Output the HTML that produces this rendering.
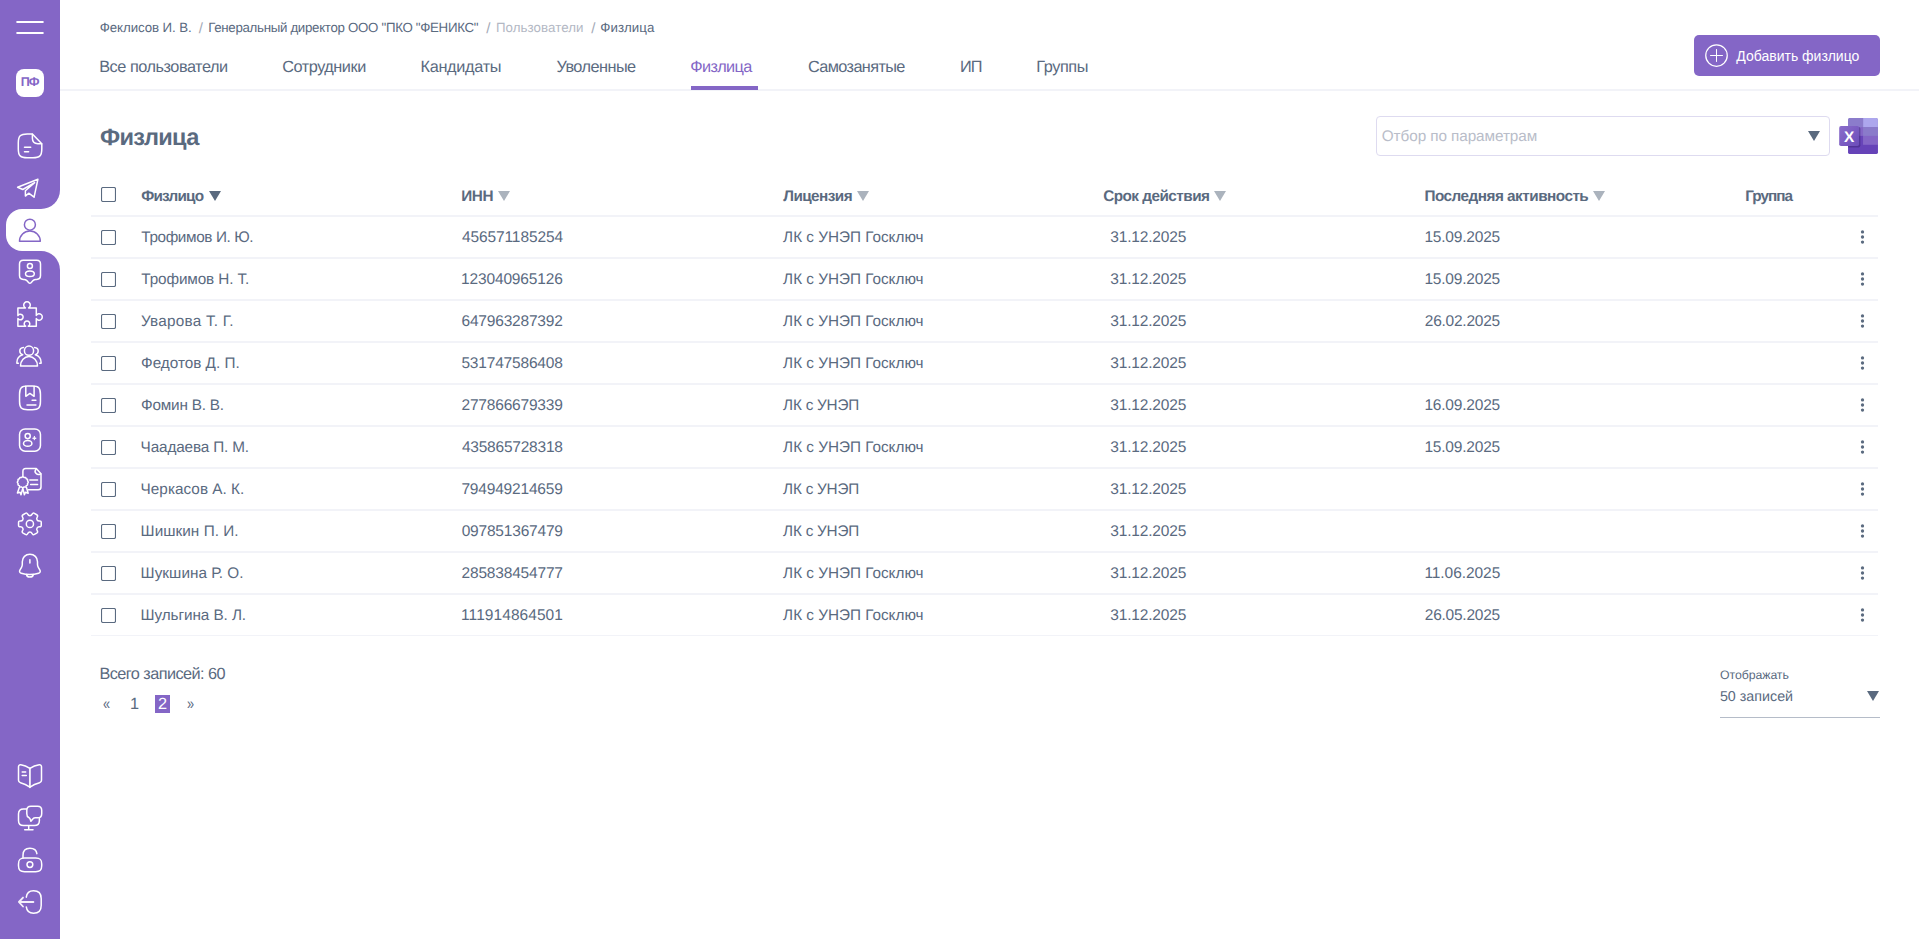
<!DOCTYPE html>
<html lang="ru">
<head>
<meta charset="utf-8">
<title>Физлица</title>
<style>
*{box-sizing:border-box;margin:0;padding:0}
html,body{width:1919px;height:939px;overflow:hidden;background:#fff}
body{font-family:"Liberation Sans",sans-serif;color:#5a6a7f;font-size:15.3px;position:relative;text-rendering:geometricPrecision}
a{color:inherit;text-decoration:none}
button{font-family:"Liberation Sans",sans-serif;border:0;cursor:pointer}

/* ---------- sidebar ---------- */
.sidebar{position:absolute;left:0;top:0;width:60px;height:939px;background:#8466c6}
.burger{position:absolute;left:16px;top:20px;width:28px;height:14px;display:block}
.burger svg{display:block;width:28px;height:14px;fill:none;stroke:#fff;stroke-width:1.8;stroke-linecap:round}
.logo{position:absolute;left:16px;top:69px;width:28px;height:28px;border-radius:8px;background:#fff;color:#8466c6;font-weight:700;font-size:12.6px;line-height:27.4px;text-align:center;letter-spacing:-.9px;text-indent:-.6px}
.ico{position:absolute;left:10px;width:40px;height:40px;display:block}
.ico svg{display:block;width:40px;height:40px;fill:none;stroke:#fff;stroke-width:1.5;stroke-linecap:round;stroke-linejoin:round}
.ico.on svg{stroke:#8466c6}
.active-bg{position:absolute;left:6px;top:209px;width:54px;height:42px;background:#fff;border-radius:16px 0 0 16px}
.notch{position:absolute;right:0;width:19px;height:19px;background:#fff;overflow:hidden}
.notch:before{content:"";position:absolute;left:-19px;width:38px;height:38px;background:#8466c6;border-radius:19px}
.notch.up{top:190px}
.notch.up:before{top:-19px}
.notch.down{top:251px}
.notch.down:before{top:0}

/* ---------- header ---------- */
.header{position:absolute;left:60px;top:0;width:1859px;height:91px;border-bottom:2px solid #f2f3f8}
.crumbs{position:absolute;left:0;top:20px;height:16px;font-size:13.3px;line-height:16px;white-space:nowrap;color:#5a6a7f}
.crumbs a,.crumbs span{position:absolute;top:0}
.crumbs .sep{color:#a4aab7;font-size:15px;margin-left:-.3px;top:1px}
.crumbs .muted{color:#b3b8c4}
.tabs{position:absolute;left:0;top:0;height:90px}
.tabs a{position:absolute;top:57px;font-size:16.3px;line-height:20px;white-space:nowrap;color:#5a6a7f}
.tabs a.on{color:#8466c6}
.tabs .bar{position:absolute;left:631px;top:86px;width:67px;height:4px;background:#8466c6}
.addbtn{position:absolute;left:1634px;top:35px;width:186px;height:41px;border-radius:5px;background:#8466c6;color:#fff;font-size:14px;line-height:41px;white-space:nowrap;text-align:left}
.addbtn svg{position:absolute;left:9px;top:7px;width:27px;height:27px;fill:none;stroke:#fff;stroke-width:1}
.addbtn span{position:absolute;left:42.3px;top:1px;text-rendering:auto}

/* ---------- toolbar ---------- */
h1{position:absolute;top:123px;font-size:23.6px;line-height:30px;font-weight:700;color:#5a6a7f;white-space:nowrap}
.filter{position:absolute;left:1376px;top:116px;width:454px;height:40px;border:1px solid #dedbf0;border-radius:4px;background:#fff}
.filter span{position:absolute;top:1px;line-height:38px;font-size:15.3px;color:#b9bdc9;white-space:nowrap}
.filter i{position:absolute;right:9px;top:13.5px;width:0;height:0;border-left:6px solid transparent;border-right:6px solid transparent;border-top:10px solid #5a6a7f}
.xls{position:absolute;left:1838px;top:117px;width:41px;height:38px;display:block}
.xls svg{display:block;width:41px;height:38px}

/* ---------- table ---------- */
table{position:absolute;left:91px;top:174px;width:1787px;border-collapse:separate;border-spacing:0;table-layout:fixed}
th,td{height:42px;padding:11px 0 0 8px;text-align:left;font-size:15.3px;line-height:20px;white-space:nowrap;vertical-align:top;border-bottom:2px solid #f2f3f8;color:#5a6a7f;font-weight:400;overflow:visible}
th{font-weight:700;height:43px;padding-top:13px}
td.n{font-size:15.5px}
th{position:relative}
th .s{position:absolute;top:17px;width:0;height:0;border-left:6px solid transparent;border-right:6px solid transparent;border-top:10px solid #abb3bd}
th .s.dark{border-top-color:#5a6a7f}
th.c,td.c{padding:13px 0 0 10px}
.cb{display:block;width:15px;height:15px;fill:#fff;stroke:#5a6a80;stroke-width:1.15}
td.k{padding:12px 0 0 13px}
.kebab{display:block;width:7px;height:16px;fill:#5a6a7f}
tbody tr:last-child td{height:41px;border-bottom:1px solid #f2f3f8}

/* ---------- footer ---------- */
.total{position:absolute;top:664px;font-size:16.3px;line-height:20px;white-space:nowrap}
.pager{position:absolute;left:0;top:695px;height:18px;font-size:16.3px;line-height:18px}
.pager a{position:absolute;top:0;height:18px}
.pager a.g{transform:scaleX(.78);transform-origin:0 50%}
.pager a.on{background:#8466c6;color:#fff;width:15px;text-align:center}
.show{position:absolute;left:1720px;top:666px;width:160px;height:52px;border-bottom:1px solid #b5bcc8}
.show label{position:absolute;top:2px;font-size:12.3px;line-height:14px;white-space:nowrap}
.show span{position:absolute;top:21px;font-size:14.3px;line-height:20px;white-space:nowrap}
.show i{position:absolute;right:1px;top:25px;width:0;height:0;border-left:6px solid transparent;border-right:6px solid transparent;border-top:10px solid #5a6a7f}
</style>
</head>
<body>
<nav class="sidebar">
  <a class="burger"><svg viewBox="0 0 28 14"><path d="M1.1 2h25.8M1.1 13h25.8"/></svg></a>
  <a class="logo">ПФ</a>
  <div class="notch up"></div>
  <div class="active-bg"></div>
  <div class="notch down"></div>
  <a class="ico" style="top:126px"><svg viewBox="0 0 40 40"><path d="M22.4 7.9H17.2C10.4 7.9 8.3 10 8.3 16.8V22.9C8.3 29.7 10.4 31.8 17.2 31.8H22.9C29.7 31.8 31.8 29.7 31.8 22.9V17.7L22.4 7.9Z"/><path d="M22.4 8.2V12.3C22.4 16.2 23.9 17.7 27.8 17.7H31.6"/><path d="M14.5 21.2H20.7M14.5 25.8H18.6"/></svg></a>
  <a class="ico" style="top:168px"><svg viewBox="0 0 40 40"><path d="M27.9 11.3L7.6 19.2L12.8 21.5L24.6 14.6L15.4 22.7V28.1L18.7 25.2L24.1 29.2Z"/></svg></a>
  <a class="ico on" style="top:210px"><svg viewBox="0 0 40 40"><circle cx="19.9" cy="14.7" r="5.5"/><path d="M9.5 31.2A10.4 10.3 0 0 1 30.3 31.2Z"/></svg></a>
  <a class="ico" style="top:252px"><svg viewBox="0 0 40 40"><path d="M13.3 8.3H26.7C29.3 8.3 30.5 9.5 30.5 12.1V23.6C30.5 26.2 29.3 27.4 26.7 27.4H25.8C24.6 27.4 23.8 27.8 23 28.6L21.3 30.4C20.4 31.4 19.4 31.4 18.5 30.4L16.8 28.6C16 27.8 15.2 27.4 14 27.4H13.3C10.7 27.4 9.5 26.2 9.5 23.6V12.1C9.5 9.5 10.7 8.3 13.3 8.3Z"/><circle cx="19.9" cy="14.1" r="2.5"/><ellipse cx="19.9" cy="21.7" rx="4.4" ry="2.8"/></svg></a>
  <a class="ico" style="top:294px"><svg viewBox="0 0 40 40"><path d="M7.9 13.95H15.4A3.3 3.3 0 1 1 18.6 13.95H26.3V21.4A3.2 3.2 0 1 1 26.3 24.6V32.2H18.3A2.8 2.8 0 1 0 15.7 32.2H7.9V24.4A2.8 2.8 0 1 0 7.9 21.6Z"/></svg></a>
  <a class="ico" style="top:336px"><svg viewBox="0 0 40 40"><circle cx="19" cy="14.7" r="4.6"/><path d="M10.500 29.900A8.500 9.400 0 0 1 27.500 29.900Z"/><path d="M13.500 11.500C11.300 11.700 9.800 13.100 9.800 15C9.800 16.800 11 18.200 12.700 18.700C9.200 19.900 6.900 22.800 6.900 26.200V27.200H8.400"/><path d="M24.500 11.500C26.700 11.700 28.200 13.100 28.200 15C28.200 16.800 27 18.200 25.300 18.700C28.800 19.900 31.100 22.800 31.100 26.200V27.200H29.600"/></svg></a>
  <a class="ico" style="top:378px"><svg viewBox="0 0 40 40"><path d="M17.6 8.1H22.4C28.6 8.1 30.45 9.95 30.45 16.3V23.5C30.45 29.8 28.6 31.65 22.4 31.65H17.6C11.4 31.65 9.55 29.8 9.55 23.5V16.3C9.55 9.95 11.4 8.1 17.6 8.1Z"/><path d="M15.800 8.300V18.300L19.900 15.400L24.100 18.300V8.300"/><path d="M22.100 22.200H25.900M17 26.900H25.900"/></svg></a>
  <a class="ico" style="top:420px"><svg viewBox="0 0 40 40"><rect x="9.55" y="8.9" width="20.9" height="22.3" rx="5.6" ry="5.6"/><circle cx="17.700" cy="16.100" r="2.550"/><ellipse cx="17.700" cy="23.400" rx="4.200" ry="2.850"/><path d="M24.400 16.500C24.600 17.700 25 18.100 26.200 18.300C25 18.500 24.600 18.900 24.400 20.100C24.200 18.900 23.800 18.500 22.600 18.300C23.800 18.100 24.200 17.700 24.400 16.500Z" fill="#fff" stroke-width=".9"/></svg></a>
  <a class="ico" style="top:462px"><svg viewBox="0 0 40 40"><path d="M12.900 14V9.400C12.900 7.500 13.800 6.600 15.700 6.600H26.300L31 11.800V25C31 26.900 30.100 27.800 28.200 27.800H18.400"/><path d="M26.200 6.900C24.900 8.300 24.900 10.300 26.100 11.500C27.300 12.700 29.300 12.700 30.700 11.800"/><path d="M19.800 17.900H27.600M20.600 22.400H27.600"/><path d="M18.30 20.20L17.96 20.88L17.53 21.47L17.60 22.19L17.56 22.95L16.93 23.37L16.26 23.66L15.97 24.33L15.55 24.96L14.79 25.00L14.07 24.93L13.48 25.36L12.80 25.70L12.12 25.36L11.53 24.93L10.81 25.00L10.05 24.96L9.63 24.33L9.34 23.66L8.67 23.37L8.04 22.95L8.00 22.19L8.07 21.47L7.64 20.88L7.30 20.20L7.64 19.52L8.07 18.93L8.00 18.21L8.04 17.45L8.67 17.03L9.34 16.74L9.63 16.07L10.05 15.44L10.81 15.40L11.53 15.47L12.12 15.04L12.80 14.70L13.48 15.04L14.07 15.47L14.79 15.40L15.55 15.44L15.97 16.07L16.26 16.74L16.93 17.03L17.56 17.45L17.60 18.21L17.53 18.93L17.96 19.52L18.30 20.20Z"/><path d="M9.400 25.200L7.400 31L10.100 30.200L11 32.800L12.800 26.300M12.800 26.300L14.400 32.800L15.500 30.200L18.200 31.300L16.400 25.200"/></svg></a>
  <a class="ico" style="top:504px"><svg viewBox="0 0 40 40"><path d="M29.55 16.95Q31.25 16.86 31.25 18.56L31.25 21.24Q31.25 22.94 29.55 22.85L29.44 22.85Q27.75 22.76 27.02 24.01L27.02 24.01Q26.30 25.27 27.22 26.69L27.28 26.78Q28.21 28.21 26.74 29.06L24.41 30.40Q22.94 31.25 22.17 29.73L22.12 29.64Q21.35 28.12 19.90 28.12L19.90 28.12Q18.45 28.12 17.68 29.64L17.63 29.73Q16.86 31.25 15.39 30.40L13.06 29.06Q11.59 28.21 12.52 26.78L12.58 26.69Q13.50 25.27 12.78 24.01L12.78 24.01Q12.05 22.76 10.36 22.85L10.25 22.85Q8.55 22.94 8.55 21.24L8.55 18.56Q8.55 16.86 10.25 16.95L10.36 16.95Q12.05 17.04 12.78 15.79L12.78 15.79Q13.50 14.53 12.58 13.11L12.52 13.02Q11.59 11.59 13.06 10.74L15.39 9.40Q16.86 8.55 17.63 10.07L17.68 10.16Q18.45 11.68 19.90 11.68L19.90 11.68Q21.35 11.68 22.12 10.16L22.17 10.07Q22.94 8.55 24.41 9.40L26.74 10.74Q28.21 11.59 27.28 13.02L27.22 13.11Q26.30 14.53 27.02 15.79L27.02 15.79Q27.75 17.04 29.44 16.95Z"/><circle cx="19.900" cy="19.900" r="3.600"/></svg></a>
  <a class="ico" style="top:546px"><svg viewBox="0 0 40 40"><path d="M19.900 8.200C15.500 8.200 12.300 11.400 12.300 15.800V18.500C12.300 19.500 12 20.400 11.500 21.300L9.900 24.100C9.100 25.500 9.700 26.800 11.200 27.200C16.900 28.800 22.900 28.800 28.600 27.200C30.100 26.800 30.700 25.500 29.900 24.100L28.300 21.300C27.800 20.400 27.500 19.500 27.500 18.500V15.800C27.500 11.400 24.300 8.200 19.900 8.200Z"/><path d="M16.500 28.500C17.100 31.900 22.700 31.900 23.300 28.500"/><path d="M19.900 13.700V16.900"/></svg></a>
  <a class="ico" style="top:756px"><svg viewBox="0 0 40 40"><path d="M19.900 12.400C17 10.500 14 9.300 10.800 8.800C9.400 8.600 8.500 9.500 8.500 10.800V24.300C8.500 25.600 9.200 26.400 10.500 26.700C13.800 27.500 16.900 29 19.900 31.200C22.900 29 26.200 27.500 29.500 26.700C30.800 26.400 31.500 25.600 31.500 24.300V10.800C31.500 9.500 30.600 8.600 29.200 8.800C26 9.300 22.800 10.500 19.900 12.400Z"/><path d="M19.900 12.400V31.200" stroke-width="1.85" opacity=".9"/><path d="M12.200 16H15.700M12.200 19.500H16.300"/></svg></a>
  <a class="ico" style="top:798px"><svg viewBox="0 0 40 40"><path d="M16.400 10.900H13.600C10 10.900 8.500 12.400 8.500 16V22.400C8.500 26 10 27.500 13.600 27.500H24.300C27.900 27.500 29.400 26 29.400 22.400V20.600"/><path d="M18.700 27.700V31.700M14.700 31.700H23"/><path d="M20.900 8.200H27.600C30.500 8.200 31.700 9.400 31.700 12.300V15.700C31.700 18.600 30.500 19.800 27.600 19.800H25.400C24.300 19.800 23.500 20.200 22.800 21L20.900 23.300L19.900 20.600C19.600 20 19.300 19.800 18.700 19.500C17.300 18.800 16.800 17.700 16.800 15.700V12.300C16.800 9.400 18 8.200 20.900 8.200Z"/></svg></a>
  <a class="ico" style="top:840px"><svg viewBox="0 0 40 40"><path d="M14.500 17.900H25.700C30.200 17.900 31.700 19.400 31.700 23.900V25.700C31.700 30.200 30.200 31.700 25.700 31.700H14.500C10 31.700 8.500 30.200 8.500 25.700V23.900C8.500 19.400 10 17.900 14.500 17.900Z"/><path d="M13 17.700V15.200C13 10.900 15.600 8.300 19.900 8.300C23.900 8.300 26.500 10.300 26.900 13.700"/><circle cx="19.900" cy="24.600" r="2.900"/></svg></a>
  <a class="ico" style="top:882px"><svg viewBox="0 0 40 40"><path d="M16.300 15.200C16.800 10.800 19 8.800 23.500 8.800C28.900 8.800 31.200 11.100 31.200 16.500V23.500C31.200 28.900 28.900 31.200 23.500 31.200C19 31.200 16.800 29.200 16.300 24.900"/><path d="M23.400 20H9.200M13 15.600L8.900 20L13 24.500" stroke-width="1.85" opacity=".9"/></svg></a>
</nav>

<header class="header">
  <nav class="crumbs">
    <a style="left:39.8px;letter-spacing:-0.09px;">Феклисов И. В.</a>
    <span class="sep" style="left:139.0px;letter-spacing:0.00px;">/</span>
    <a style="left:148.2px;letter-spacing:-0.31px;">Генеральный директор ООО &quot;ПКО &quot;ФЕНИКС&quot;</a>
    <span class="sep" style="left:426.5px;letter-spacing:0.00px;">/</span>
    <a class="muted" style="left:436.0px;letter-spacing:0.06px;">Пользователи</a>
    <span class="sep" style="left:531.5px;letter-spacing:0.00px;">/</span>
    <a style="left:540.3px;letter-spacing:0.05px;">Физлица</a>
  </nav>
  <nav class="tabs">
    <a style="left:39.2px;letter-spacing:-0.47px;">Все пользователи</a>
    <a style="left:222.2px;letter-spacing:-0.46px;">Сотрудники</a>
    <a style="left:360.5px;letter-spacing:-0.31px;">Кандидаты</a>
    <a style="left:496.5px;letter-spacing:-0.53px;">Уволенные</a>
    <a class="on" style="left:630.2px;letter-spacing:-0.60px;">Физлица</a>
    <a style="left:748.0px;letter-spacing:-0.62px;">Самозанятые</a>
    <a style="left:900.0px;letter-spacing:-1.07px;">ИП</a>
    <a style="left:976.2px;letter-spacing:-0.40px;">Группы</a>
    <i class="bar"></i>
  </nav>
  <button class="addbtn"><svg viewBox="0 0 27 27"><circle cx="13.5" cy="13.5" r="10.75" stroke-width="1.25"/><path d="M13.5 7.1v12.8M7.1 13.5h12.8"/></svg><span>Добавить физлицо</span></button>
</header>

<main>
<h1 style="left:100.0px;letter-spacing:-0.70px">Физлица</h1>
<div class="filter"><span style="left:4.8px;letter-spacing:-0.08px">Отбор по параметрам</span><i></i></div>
<a class="xls"><svg viewBox="0 0 41 38"><defs><linearGradient id="xg" x1="0" y1="0" x2="1" y2="1"><stop offset="0" stop-color="#8a6dca"/><stop offset="1" stop-color="#6c4cba"/></linearGradient><clipPath id="xc"><rect x="10.1" y="1" width="29.8" height="36" rx="1.8"/></clipPath></defs><g clip-path="url(#xc)"><rect x="10" y="1" width="31" height="36" fill="#8a7bca"/><rect x="10" y="1" width="15.2" height="9.1" fill="#8b7ccb"/><rect x="25.2" y="1" width="15" height="9.1" fill="#ada7ed"/><rect x="10" y="10.100" width="15.2" height="9.200" fill="#8466c6"/><rect x="25.2" y="10.100" width="15" height="9.200" fill="#8a7bca"/><rect x="10" y="18.900" width="15.400" height="9.200" fill="#6845b9"/><rect x="25.2" y="18.900" width="15" height="9.200" fill="#8466c6"/><rect x="10" y="27.800" width="30.200" height="9.200" fill="#6643b8"/><rect x="2.400" y="10" width="20" height="20.400" rx="1.800" fill="#35206e" opacity=".45"/></g><rect x="1.200" y="9.100" width="19.900" height="19.900" rx="1.800" fill="url(#xg)"/><text x="11.150" y="24.600" text-anchor="middle" font-family="Liberation Sans,sans-serif" font-size="15.4" font-weight="700" fill="#fff">X</text></svg></a>

<table>
  <colgroup><col style="width:42px"><col style="width:321px"><col style="width:321px"><col style="width:321px"><col style="width:321px"><col style="width:320px"><col style="width:109px"><col style="width:32px"></colgroup>
  <thead>
    <tr><th class="c"><svg class="cb" viewBox="0 0 15 15"><rect x=".5" y=".5" width="14" height="14" rx="1.5"/></svg></th><th style="padding-left:8.2px"><span style="letter-spacing:-0.81px">Физлицо</span><i class="s dark" style="left:76.2px"></i></th><th style="padding-left:7.2px"><span style="letter-spacing:-0.35px">ИНН</span><i class="s" style="left:43.6px"></i></th><th style="padding-left:8.2px"><span style="letter-spacing:-0.54px">Лицензия</span><i class="s" style="left:81.8px"></i></th><th style="padding-left:7.2px"><span style="letter-spacing:-0.52px">Срок действия</span><i class="s" style="left:118.1px"></i></th><th style="padding-left:7.5px"><span style="letter-spacing:-0.51px">Последняя активность</span><i class="s" style="left:176.4px"></i></th><th style="padding-left:8.2px"><span style="letter-spacing:-0.98px">Группа</span></th><th></th></tr>
  </thead>
  <tbody>
    <tr><td class="c"><svg class="cb" viewBox="0 0 15 15"><rect x=".5" y=".5" width="14" height="14" rx="1.5"/></svg></td><td style="padding-left:8.3px;letter-spacing:-0.38px">Трофимов И. Ю.</td><td class="n" style="padding-left:7.9px;letter-spacing:-0.10px">456571185254</td><td style="padding-left:8.1px;letter-spacing:0.00px">ЛК с УНЭП Госключ</td><td class="n" style="padding-left:14.3px;letter-spacing:-0.18px">31.12.2025</td><td class="n" style="padding-left:7.4px;letter-spacing:-0.20px">15.09.2025</td><td></td><td class="k"><svg class="kebab" viewBox="0 0 7 16"><circle cx="3.5" cy="2.95" r="1.65"/><circle cx="3.5" cy="8" r="1.65"/><circle cx="3.5" cy="13.05" r="1.65"/></svg></td></tr>
    <tr><td class="c"><svg class="cb" viewBox="0 0 15 15"><rect x=".5" y=".5" width="14" height="14" rx="1.5"/></svg></td><td style="padding-left:8.3px;letter-spacing:-0.12px">Трофимов Н. Т.</td><td class="n" style="padding-left:7.1px;letter-spacing:-0.16px">123040965126</td><td style="padding-left:8.1px;letter-spacing:0.00px">ЛК с УНЭП Госключ</td><td class="n" style="padding-left:14.3px;letter-spacing:-0.18px">31.12.2025</td><td class="n" style="padding-left:7.4px;letter-spacing:-0.20px">15.09.2025</td><td></td><td class="k"><svg class="kebab" viewBox="0 0 7 16"><circle cx="3.5" cy="2.95" r="1.65"/><circle cx="3.5" cy="8" r="1.65"/><circle cx="3.5" cy="13.05" r="1.65"/></svg></td></tr>
    <tr><td class="c"><svg class="cb" viewBox="0 0 15 15"><rect x=".5" y=".5" width="14" height="14" rx="1.5"/></svg></td><td style="padding-left:8.0px;letter-spacing:0.23px">Уварова Т. Г.</td><td class="n" style="padding-left:7.5px;letter-spacing:-0.19px">647963287392</td><td style="padding-left:8.1px;letter-spacing:0.00px">ЛК с УНЭП Госключ</td><td class="n" style="padding-left:14.3px;letter-spacing:-0.18px">31.12.2025</td><td class="n" style="padding-left:7.8px;letter-spacing:-0.25px">26.02.2025</td><td></td><td class="k"><svg class="kebab" viewBox="0 0 7 16"><circle cx="3.5" cy="2.95" r="1.65"/><circle cx="3.5" cy="8" r="1.65"/><circle cx="3.5" cy="13.05" r="1.65"/></svg></td></tr>
    <tr><td class="c"><svg class="cb" viewBox="0 0 15 15"><rect x=".5" y=".5" width="14" height="14" rx="1.5"/></svg></td><td style="padding-left:8.0px;letter-spacing:0.00px">Федотов Д. П.</td><td class="n" style="padding-left:7.4px;letter-spacing:-0.18px">531747586408</td><td style="padding-left:8.1px;letter-spacing:0.00px">ЛК с УНЭП Госключ</td><td class="n" style="padding-left:14.3px;letter-spacing:-0.18px">31.12.2025</td><td></td><td></td><td class="k"><svg class="kebab" viewBox="0 0 7 16"><circle cx="3.5" cy="2.95" r="1.65"/><circle cx="3.5" cy="8" r="1.65"/><circle cx="3.5" cy="13.05" r="1.65"/></svg></td></tr>
    <tr><td class="c"><svg class="cb" viewBox="0 0 15 15"><rect x=".5" y=".5" width="14" height="14" rx="1.5"/></svg></td><td style="padding-left:8.0px;letter-spacing:-0.20px">Фомин В. В.</td><td class="n" style="padding-left:7.5px;letter-spacing:-0.19px">277866679339</td><td style="padding-left:8.1px;letter-spacing:-0.22px">ЛК с УНЭП</td><td class="n" style="padding-left:14.3px;letter-spacing:-0.18px">31.12.2025</td><td class="n" style="padding-left:7.4px;letter-spacing:-0.20px">16.09.2025</td><td></td><td class="k"><svg class="kebab" viewBox="0 0 7 16"><circle cx="3.5" cy="2.95" r="1.65"/><circle cx="3.5" cy="8" r="1.65"/><circle cx="3.5" cy="13.05" r="1.65"/></svg></td></tr>
    <tr><td class="c"><svg class="cb" viewBox="0 0 15 15"><rect x=".5" y=".5" width="14" height="14" rx="1.5"/></svg></td><td style="padding-left:7.6px;letter-spacing:-0.14px">Чаадаева П. М.</td><td class="n" style="padding-left:7.9px;letter-spacing:-0.22px">435865728318</td><td style="padding-left:8.1px;letter-spacing:0.00px">ЛК с УНЭП Госключ</td><td class="n" style="padding-left:14.3px;letter-spacing:-0.18px">31.12.2025</td><td class="n" style="padding-left:7.4px;letter-spacing:-0.20px">15.09.2025</td><td></td><td class="k"><svg class="kebab" viewBox="0 0 7 16"><circle cx="3.5" cy="2.95" r="1.65"/><circle cx="3.5" cy="8" r="1.65"/><circle cx="3.5" cy="13.05" r="1.65"/></svg></td></tr>
    <tr><td class="c"><svg class="cb" viewBox="0 0 15 15"><rect x=".5" y=".5" width="14" height="14" rx="1.5"/></svg></td><td style="padding-left:7.6px;letter-spacing:0.03px">Черкасов А. К.</td><td class="n" style="padding-left:7.4px;letter-spacing:-0.18px">794949214659</td><td style="padding-left:8.1px;letter-spacing:-0.22px">ЛК с УНЭП</td><td class="n" style="padding-left:14.3px;letter-spacing:-0.18px">31.12.2025</td><td></td><td></td><td class="k"><svg class="kebab" viewBox="0 0 7 16"><circle cx="3.5" cy="2.95" r="1.65"/><circle cx="3.5" cy="8" r="1.65"/><circle cx="3.5" cy="13.05" r="1.65"/></svg></td></tr>
    <tr><td class="c"><svg class="cb" viewBox="0 0 15 15"><rect x=".5" y=".5" width="14" height="14" rx="1.5"/></svg></td><td style="padding-left:7.6px;letter-spacing:0.04px">Шишкин П. И.</td><td class="n" style="padding-left:7.7px;letter-spacing:-0.20px">097851367479</td><td style="padding-left:8.1px;letter-spacing:-0.22px">ЛК с УНЭП</td><td class="n" style="padding-left:14.3px;letter-spacing:-0.18px">31.12.2025</td><td></td><td></td><td class="k"><svg class="kebab" viewBox="0 0 7 16"><circle cx="3.5" cy="2.95" r="1.65"/><circle cx="3.5" cy="8" r="1.65"/><circle cx="3.5" cy="13.05" r="1.65"/></svg></td></tr>
    <tr><td class="c"><svg class="cb" viewBox="0 0 15 15"><rect x=".5" y=".5" width="14" height="14" rx="1.5"/></svg></td><td style="padding-left:7.6px;letter-spacing:0.04px">Шукшина Р. О.</td><td class="n" style="padding-left:7.5px;letter-spacing:-0.18px">285838454777</td><td style="padding-left:8.1px;letter-spacing:0.00px">ЛК с УНЭП Госключ</td><td class="n" style="padding-left:14.3px;letter-spacing:-0.18px">31.12.2025</td><td class="n" style="padding-left:7.4px;letter-spacing:-0.06px">11.06.2025</td><td></td><td class="k"><svg class="kebab" viewBox="0 0 7 16"><circle cx="3.5" cy="2.95" r="1.65"/><circle cx="3.5" cy="8" r="1.65"/><circle cx="3.5" cy="13.05" r="1.65"/></svg></td></tr>
    <tr><td class="c"><svg class="cb" viewBox="0 0 15 15"><rect x=".5" y=".5" width="14" height="14" rx="1.5"/></svg></td><td style="padding-left:7.6px;letter-spacing:-0.08px">Шульгина В. Л.</td><td class="n" style="padding-left:7.1px;letter-spacing:0.06px">111914864501</td><td style="padding-left:8.1px;letter-spacing:0.00px">ЛК с УНЭП Госключ</td><td class="n" style="padding-left:14.3px;letter-spacing:-0.18px">31.12.2025</td><td class="n" style="padding-left:7.8px;letter-spacing:-0.25px">26.05.2025</td><td></td><td class="k"><svg class="kebab" viewBox="0 0 7 16"><circle cx="3.5" cy="2.95" r="1.65"/><circle cx="3.5" cy="8" r="1.65"/><circle cx="3.5" cy="13.05" r="1.65"/></svg></td></tr>
  </tbody>
</table>

<div class="total" style="left:99.5px;letter-spacing:-0.57px">Всего записей: 60</div>
<nav class="pager"><a class="g" style="left:103.2px">«</a><a style="left:130px">1</a><a class="on" style="left:155px">2</a><a class="g" style="left:187.2px">»</a></nav>
<div class="show"><label style="left:0.1px;letter-spacing:-0.08px">Отображать</label><span style="left:-0.1px;letter-spacing:-0.00px">50 записей</span><i></i></div>
</main>

</body>
</html>
